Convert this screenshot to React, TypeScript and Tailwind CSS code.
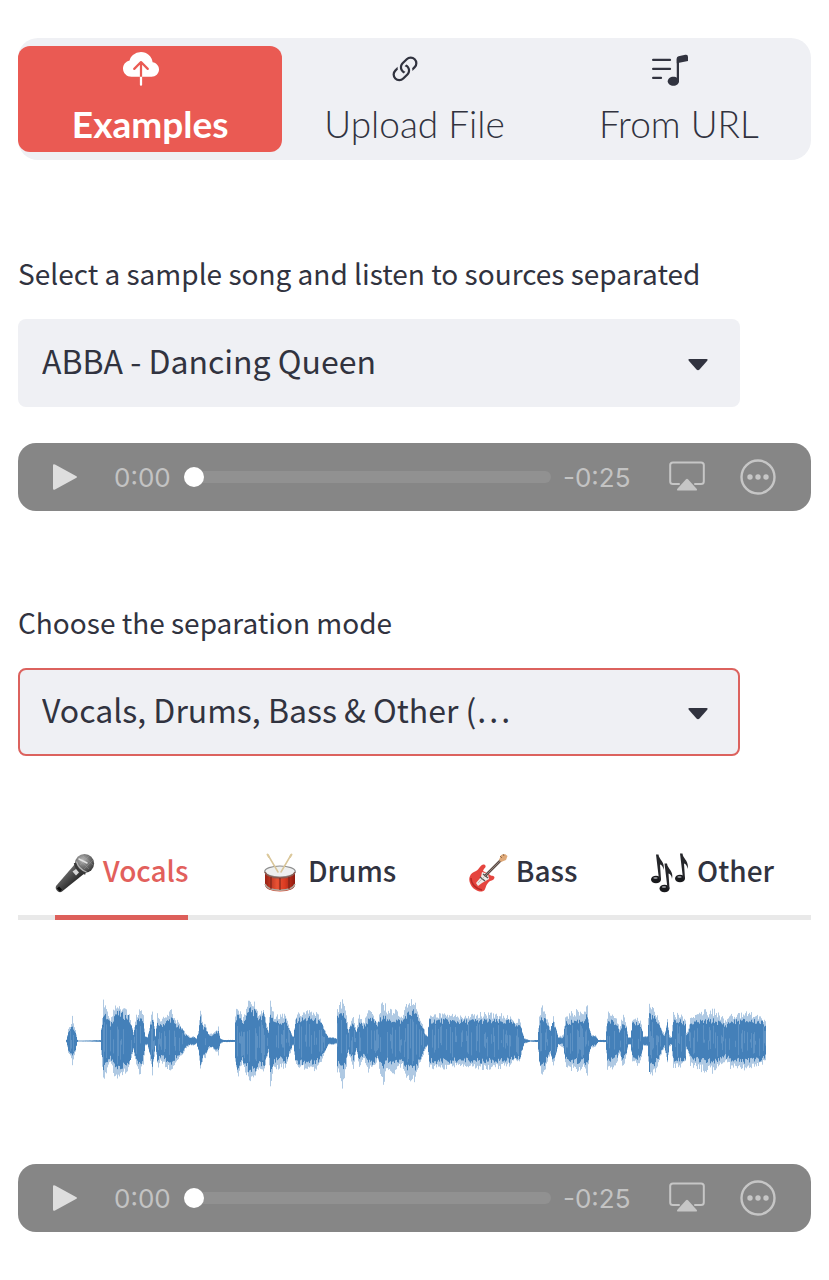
import { useState, type ReactNode } from "react";
import { BsCloudUploadFill, BsLink45Deg, BsMusicNoteList } from "react-icons/bs";

// [x, body, peak]: half heights of the wave at a few places along the clip
const ENVELOPE: [number, number, number][] = [
    [66, 1, 2], [68, 9, 12], [71, 14, 17], [72, 16, 24], [75, 8, 12], [77, 1, 1], [78, 0.3, 0.3], [88, 0.4, 0.4], [100, 0.8, 0.8],
    [101, 10, 14], [103, 27, 40], [108, 20, 26], [110, 16, 20], [115, 27, 38], [121, 26, 34], [128, 23, 30], [131, 14, 18], [133, 7, 9],
    [136, 18, 26], [140, 23, 34], [143, 16, 26], [145, 4, 5], [147, 3, 4], [149, 10, 13], [152, 24, 34], [154, 12, 16], [155, 4, 6],
    [157, 18, 28], [160, 15, 20], [165, 18, 26], [171, 22, 31], [176, 15, 22], [182, 11, 14], [185, 6, 8], [190, 3, 4], [193, 4, 5],
    [196, 2, 3], [198, 8, 10], [200, 24, 31], [203, 12, 16], [205, 13, 18], [208, 6, 8], [212, 5, 7], [215, 8, 10], [218, 9, 14],
    [220, 2, 3], [223, 1, 1], [234, 1, 1], [235, 18, 24], [237, 27, 38], [242, 18, 24], [247, 25, 36], [249, 32, 44], [254, 28, 38],
    [258, 23, 28], [263, 25, 34], [267, 12, 15], [268, 8, 12], [270, 27, 43], [274, 19, 27], [280, 18, 28], [285, 20, 27], [288, 14, 18],
    [292, 4, 6], [293, 4, 5], [295, 18, 24], [297, 21, 28], [303, 21, 28], [310, 22, 31], [318, 19, 28], [322, 15, 18], [325, 8, 10],
    [328, 3, 4], [333, 3, 4], [336, 2, 3], [337, 22, 32], [342, 27, 45], [345, 22, 32], [348, 9, 12], [350, 14, 18], [353, 17, 29],
    [356, 8, 10], [359, 19, 28], [363, 14, 18], [368, 20, 31], [373, 21, 28], [377, 15, 19], [383, 27, 44], [387, 19, 28], [393, 21, 33],
    [402, 19, 25], [406, 26, 36], [410, 27, 41], [414, 29, 43], [418, 20, 28], [422, 14, 18], [425, 6, 8], [427, 4, 5], [429, 20, 27],
    [445, 20, 28], [460, 19, 25], [480, 20, 28], [500, 19, 27], [510, 19, 25], [515, 15, 18], [519, 18, 23], [522, 8, 10], [524, 2, 3],
    [530, 0.5, 0.5], [537, 1, 1], [539, 18, 24], [541, 25, 36], [545, 21, 30], [548, 14, 18], [550, 10, 14], [553, 19, 25],
    [556, 10, 13], [558, 3, 4], [562, 3, 6], [563, 5, 8], [565, 17, 25], [575, 20, 31], [583, 20, 27], [587, 25, 38], [589, 10, 13],
    [591, 5, 7], [595, 4, 6], [598, 1, 1], [605, 1, 1], [607, 19, 28], [612, 19, 29], [617, 15, 21], [619, 10, 14], [623, 19, 28],
    [626, 12, 15], [628, 3, 4], [630, 3, 4], [632, 16, 20], [637, 18, 25], [641, 14, 18], [643, 4, 5], [647, 4, 5], [648, 16, 22],
    [649, 27, 38], [655, 21, 31], [659, 14, 19], [662, 8, 11], [664, 5, 7], [667, 17, 22], [669, 4, 6], [671, 3, 4], [673, 19, 28],
    [680, 19, 27], [685, 17, 22], [686, 6, 8], [688, 9, 12], [690, 17, 24], [700, 19, 30], [713, 20, 32], [722, 17, 24], [725, 15, 20],
    [730, 19, 27], [747, 20, 29], [760, 19, 25], [765, 16, 20], [766, 12, 14],
];

const WAVE = buildWave();

function noise(n: number) {
    const v = Math.sin(n * 12.9898) * 43758.5453;
    return v - Math.floor(v);
}

function buildWave() {
    let body = "";
    let peaks = "";
    let streaks = "";
    let i = 0;
    for (let x = 66; x < 766; x++) {
        while (ENVELOPE[i + 1][0] <= x) i++;
        const [x0, b0, p0] = ENVELOPE[i];
        const [x1, b1, p1] = ENVELOPE[i + 1];
        const t = (x - x0) / (x1 - x0);
        const b = b0 + (b1 - b0) * t;
        const p = p0 + (p1 - p0) * t;
        const line = (up: number, down: number) => `M${x + 0.5} ${(50 - up).toFixed(1)}V${(50 + down).toFixed(1)}`;
        body += line(b * (0.85 + noise(x) * 0.3), b * (0.85 + noise(x + 900) * 0.3));
        peaks += line(b + (p - b) * (0.35 + noise(x * 3) * 0.8), b + (p - b) * (0.35 + noise(x * 5 + 1) * 0.8));
        if (b > 10 && noise(x * 7) > 0.55) {
            streaks += line(b * noise(x + 31) * 0.9, b * noise(x + 77) * 0.9);
        }
    }
    return { body, peaks, streaks };
}

function Waveform() {
    return (
        <svg viewBox="0 0 793 100" className="block w-full" role="img" aria-label="Waveform">
            <g transform="translate(-18 0)" fill="none">
                <path d={WAVE.peaks} stroke="#7aa5d0" strokeOpacity="0.6" />
                <path d={WAVE.body} stroke="#4480b9" />
                <path d={WAVE.streaks} stroke="#8fb5da" strokeOpacity="0.35" />
            </g>
        </svg>
    );
}

function MicIcon() {
    return (
        <svg width="40" height="40" viewBox="0 0 40 40" aria-hidden="true">
            <defs>
                <linearGradient id="mic-body" x1="0" y1="0" x2="1" y2="1">
                    <stop offset="0.3" stopColor="#6b6b6b" />
                    <stop offset="0.7" stopColor="#222" />
                </linearGradient>
                <radialGradient id="mic-head" cx="0.4" cy="0.3" r="0.7">
                    <stop offset="0" stopColor="#b5b5b5" />
                    <stop offset="0.6" stopColor="#6a6a6a" />
                    <stop offset="1" stopColor="#3a3a3a" />
                </radialGradient>
            </defs>
            <path d="M20 11L1 33Q0 35 1.5 37L3 38.5Q5 40 7 38.5L30 20Z" fill="url(#mic-body)" />
            <circle cx="29.5" cy="10.500" r="9.600" fill="url(#mic-head)" />
            <path d="M20 10Q21.500 18 30.500 20.500" fill="none" stroke="#383838" strokeWidth="2.5" />
            <path d="M21.500 8.500Q23.500 16 31.500 19" fill="none" stroke="#b4b4b4" strokeWidth="1.2" />
            <path d="M25 7L34 16M28 3L38 12M25 12L34 3M29 16L38 7" stroke="#bbb" strokeWidth="0.5" opacity="0.5" />
            <path d="M24 6L32 10" stroke="#e2e2e2" strokeWidth="1.5" strokeLinecap="round" />
            <path d="M17.500 18.500L21 16L24 19.500L21 22.500Z" fill="#d5d5d5" />
            <path d="M3 34.500L6 37.500" stroke="#090909" strokeWidth="3" />
        </svg>
    );
}

function DrumIcon() {
    return (
        <svg width="40" height="40" viewBox="0 0 40 40" aria-hidden="true">
            <defs>
                <linearGradient id="drum-side">
                    <stop offset="0" stopColor="#9a2114" />
                    <stop offset="0.4" stopColor="#e95334" />
                    <stop offset="0.65" stopColor="#dc3c22" />
                    <stop offset="1" stopColor="#8e1a10" />
                </linearGradient>
            </defs>
            <path d="M5 18V32Q6 38 20 38.500Q34 38 35 32V18Z" fill="url(#drum-side)" />
            <path d="M5 31Q7 37 20 37.300Q33 37 35 31" fill="none" stroke="#b0aaa0" strokeWidth="1.5" />
            <ellipse cx="20" cy="18.500" rx="15.300" ry="5.500" fill="#eef0f0" stroke="#8f8f8f" strokeWidth="1.2" />
            <path d="M5 19Q7 24.500 20 25Q33 24.500 35 19" fill="none" stroke="#8c5a50" strokeWidth="1.5" />
            <path d="M11 24V36M20 25V37M29 24V36" stroke="#6d2018" strokeWidth="1" />
            <path d="M8 2L18 19M31 2L21 19" stroke="#d9c69a" strokeWidth="1.5" strokeLinecap="round" />
            <path d="M7.500 1.500L9 4M31.500 1.500L30 4" stroke="#dcc99c" strokeWidth="2" strokeLinecap="round" />
        </svg>
    );
}

function GuitarIcon() {
    return (
        <svg width="40" height="40" viewBox="0 0 40 40" aria-hidden="true">
            <path d="M17 12C13 10 12 16 8 18C2 20 0 25 2 30C4 36 10 39 14 38.500C18 38 17 33 20 30C22 27 26 28 26.500 24.500C26 22 23 23.500 21.500 21.500L15 18C16 15 19 14 17 12Z" fill="#e5453f" />
            <path d="M3 25C3 31 8 36 14 37" fill="none" stroke="#b62825" strokeWidth="1.5" />
            <path d="M14 19L20 21L21 26L14 30L10 33L8 30L13 24Z" fill="#eeeae7" />
            <path d="M12 24L17 28M15 21L20 25" stroke="#555" strokeWidth="1.3" />
            <path d="M17 23L33 7" stroke="#5a4a45" strokeWidth="2.5" />
            <path d="M10 30L33 7" stroke="#b0a49c" strokeWidth="0.6" />
            <path d="M31 7L33 2L37 1L39.500 3L38 7L33 9Z" fill="#dfa978" />
            <path d="M32 3L34 5M35 1L36 3" stroke="#8f6b4b" strokeWidth="1" />
        </svg>
    );
}

function NotesIcon() {
    return (
        <svg width="40" height="40" viewBox="0 0 40 40" aria-hidden="true">
            <g id="note" transform="translate(1 0)">
                <ellipse cx="6" cy="26.500" rx="5" ry="3.800" fill="#18191c" />
                <path d="M6 1.500H8.500C9 7 15.500 9 13.500 17C13.200 13.500 11.800 12 10 11.500L11 26.500H9Z" fill="#25262a" />
                <ellipse cx="5.500" cy="25" rx="2.200" ry="0.900" fill="#8d8f94" />
            </g>
            <use href="#note" x="8.500" y="9" />
            <use href="#note" x="24" y="-1" />
        </svg>
    );
}

function SourceTab({ icon, label, active, onClick }: { icon: ReactNode; label: string; active: boolean; onClick: () => void }) {
    return (
        <button
            type="button"
            role="tab"
            aria-selected={active}
            onClick={onClick}
            className={`-mb-[5px] flex h-[75px] items-start gap-2 border-b-[5px] text-[28px] leading-[50px] font-medium ${
                active ? "border-[#dd5f5a] text-[#e2605c]" : "border-transparent"
            }`}
        >
            <span className="flex h-14 items-center">{icon}</span>
            {label}
        </button>
    );
}

interface SelectFieldProps {
    id: string;
    label: string;
    options: string[];
    focused?: boolean;
}

function SelectField({ id, label, options, focused }: SelectFieldProps) {
    return (
        <div>
            <label htmlFor={id} className="block text-[28px] leading-9">
                {label}
            </label>
            <div className="relative mt-7 mr-[71px]">
                <select
                    id={id}
                    className={`h-22 w-full appearance-none rounded-lg border-2 bg-[#eff0f4] pr-20 pb-1.5 pl-[22px] text-[32px] outline-none ${
                        focused ? "border-[#dc625e]" : "border-transparent"
                    }`}
                >
                    {options.map((option) => (
                        <option key={option}>{option}</option>
                    ))}
                </select>
                <svg width="20" height="12" viewBox="0 0 20 12" className="pointer-events-none absolute top-10 right-8" aria-hidden="true">
                    <path d="M1.500 0H18.500Q20.500 0 19 2L11.500 10.500Q10 12 8.500 10.500L1 2Q-0.500 0 1.500 0Z" fill="#31333f" />
                </svg>
            </div>
        </div>
    );
}

function AudioPlayer({ label }: { label: string }) {
    return (
        <div
            role="group"
            aria-label={label}
            className="flex h-[68px] items-center rounded-[18px] bg-[#868686] pr-[35px] pl-[34px] font-['Inter',sans-serif] text-[26px] text-[#c3c3c3]"
        >
            <button type="button" aria-label="Play">
                <svg width="26" height="28" viewBox="0 0 26 28">
                    <path d="M3 1.500L24 13Q26 14 24 15L3 26.500Q1 27.500 1 25.500V2.500Q1 0.500 3 1.500Z" fill="#dedede" />
                </svg>
            </button>
            <span className="ml-9 w-[58px]">0:00</span>
            <input
                type="range"
                aria-label="Position"
                defaultValue={0}
                className="mx-3 h-5 min-w-0 flex-1 appearance-none bg-transparent [&::-webkit-slider-runnable-track]:h-3 [&::-webkit-slider-runnable-track]:rounded-full [&::-webkit-slider-runnable-track]:bg-[#919191] [&::-webkit-slider-thumb]:-mt-1 [&::-webkit-slider-thumb]:size-5 [&::-webkit-slider-thumb]:appearance-none [&::-webkit-slider-thumb]:rounded-full [&::-webkit-slider-thumb]:bg-white"
            />
            <span className="w-[72px]">-0:25</span>
            <button type="button" aria-label="AirPlay" className="ml-[34px]">
                <svg width="36" height="36" viewBox="0 0 36 36" fill="none">
                    <path d="M10 25H4Q1.200 25 1.200 22.500V6Q1.200 3.500 4 3.500H32Q34.800 3.500 34.800 6V22.500Q34.800 25 32 25H26" stroke="#c6c6c6" strokeWidth="2" strokeLinecap="round" />
                    <path d="M17 20.200Q18 19.200 19 20.200L27.800 30Q28.800 31.500 27 31.500H9Q7.200 31.500 8.200 30Z" fill="#c6c6c6" />
                </svg>
            </button>
            <button type="button" aria-label="More options" className="ml-[35px]">
                <svg width="36" height="36" viewBox="0 0 36 36" fill="#c6c6c6">
                    <circle cx="18" cy="18" r="16.500" fill="none" stroke="#c6c6c6" strokeWidth="2.4" />
                    <circle cx="10" cy="18" r="2.700" />
                    <circle cx="18" cy="18" r="2.700" />
                    <circle cx="26" cy="18" r="2.700" />
                </svg>
            </button>
        </div>
    );
}

const PAGES = [
    { label: "Examples", Icon: BsCloudUploadFill },
    { label: "Upload File", Icon: BsLink45Deg },
    { label: "From URL", Icon: BsMusicNoteList },
];

const SOURCES = [
    { label: "Vocals", icon: <MicIcon /> },
    { label: "Drums", icon: <DrumIcon /> },
    { label: "Bass", icon: <GuitarIcon /> },
    { label: "Other", icon: <NotesIcon /> },
];

export default function App() {
    const [page, setPage] = useState("Examples");
    const [source, setSource] = useState("Vocals");

    return (
        <main className="bg-white px-[18px] pt-[38px] pb-12 font-['Noto_Sans_CJK_KR',sans-serif] text-[#31333f]">
            <nav className="grid grid-cols-3 rounded-[20px] bg-[#eff0f4] py-2 font-['Lato',sans-serif] text-[37px] leading-11">
                {PAGES.map(({ label, Icon }) => (
                    <button
                        key={label}
                        type="button"
                        onClick={() => setPage(label)}
                        className={`flex h-[106px] flex-col items-center rounded-xl pt-1.5 ${
                            page === label ? "bg-[#ea5a53] font-bold text-white" : "font-light"
                        }`}
                    >
                        <Icon size={36} className="mr-[18px]" aria-hidden="true" />
                        <span className="mt-3.5">{label}</span>
                    </button>
                ))}
            </nav>

            <section className="mt-[95px]">
                <SelectField id="song" label="Select a sample song and listen to sources separated" options={["ABBA - Dancing Queen"]} />
                <div className="mt-9">
                    <AudioPlayer label="Full song" />
                </div>
            </section>

            <section className="mt-[93px]">
                <SelectField id="mode" label="Choose the separation mode" options={["Vocals, Drums, Bass & Other (…"]} focused />
            </section>

            <section className="mt-[89px]">
                <div role="tablist" className="flex justify-between border-b-[5px] border-[#e9e9e9] px-[37px]">
                    {SOURCES.map(({ label, icon }) => (
                        <SourceTab key={label} icon={icon} label={label} active={source === label} onClick={() => setSource(label)} />
                    ))}
                </div>
                <div role="tabpanel" aria-label={source} className="pt-[71px]">
                    <Waveform />
                    <div className="mt-[73px]">
                        <AudioPlayer label={source} />
                    </div>
                </div>
            </section>
        </main>
    );
}
